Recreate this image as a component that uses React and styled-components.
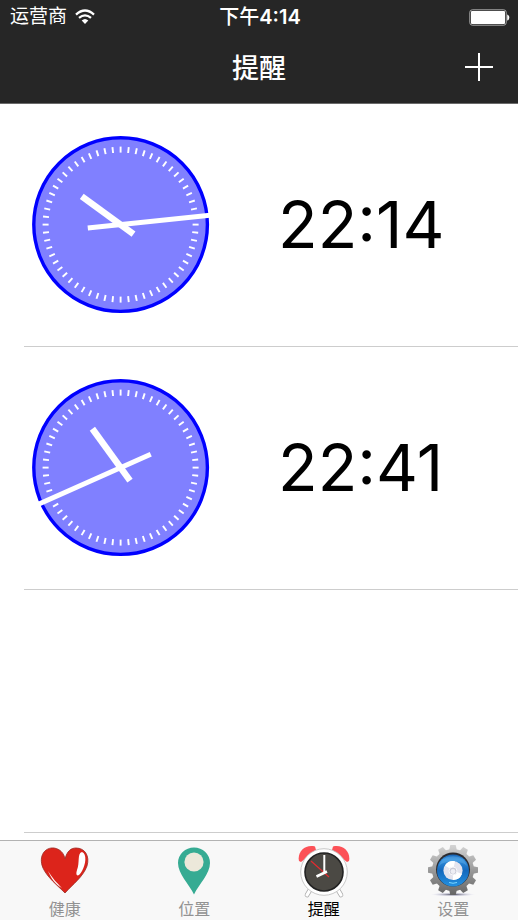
import React from 'react';
import styled, { createGlobalStyle } from 'styled-components';

const GlobalStyle = createGlobalStyle`
  * { box-sizing: border-box; }
  body {
    margin: 0;
    background: #fff;
    font-family: Inter, "Noto Sans CJK SC", sans-serif;
  }
  button { font: inherit; border: 0; padding: 0; background: none; cursor: pointer; }
`;

const Screen = styled.div`
  display: flex;
  flex-direction: column;
  height: 100vh;
`;

const Header = styled.header`
  flex: none;
  background: #262626;
  color: #fff;
  border-bottom: 1px solid #6a6a6a;
`;

const StatusBar = styled.div`
  display: grid;
  grid-template-columns: 1fr auto 1fr;
  align-items: center;
  height: 34px;
  padding: 0 8px 0 10px;
`;

const Carrier = styled.div`
  display: flex;
  align-items: center;
  gap: 8px;
  font-size: 19px;
  line-height: 32px;
  font-weight: 400;
`;

const StatusTime = styled.time`
  font-size: 20px;
  line-height: 32px;
  font-weight: 600;
  font-feature-settings: "case";
  span { font-weight: 500; }
`;

const BatteryIcon = styled.svg`
  justify-self: end;
`;

const NavBar = styled.div`
  display: grid;
  grid-template-columns: 1fr auto 1fr;
  align-items: center;
  height: 69px;
  padding: 0 24px;
`;

const Title = styled.h1`
  grid-column: 2;
  margin: 0;
  font-size: 27px;
  line-height: 40px;
  font-weight: 500;
`;

const AddButton = styled.button`
  justify-self: end;
  display: flex;
  padding-bottom: 4px;
  color: #fff;
`;

const Content = styled.main`
  flex: 1;
  min-height: 0;
  overflow: hidden;
`;

const List = styled.ul`
  margin: 0;
  padding: 0 0 0 24px;
  list-style: none;
`;

const Row = styled.li`
  display: flex;
  align-items: center;
  gap: 68px;
  height: 243px;
  padding-left: 8px;
  border-bottom: 1px solid #cdcdcd;
`;

const RowTime = styled.time`
  font-size: 65px;
  line-height: 80px;
  font-weight: 400;
  font-feature-settings: "case";
  color: #000;
`;

const TabBar = styled.nav`
  flex: none;
  display: grid;
  grid-template-columns: repeat(4, 1fr);
  height: 80px;
  background: #f8f8f8;
  border-top: 1px solid #b2b2b2;
`;

const Tab = styled.button`
  display: flex;
  flex-direction: column;
  align-items: center;
  padding-top: 4px;
  color: ${(p) => (p.$active ? '#000' : '#929292')};
`;

const TabLabel = styled.span`
  font-size: 16px;
  line-height: 20px;
`;

const range = (n) => Array.from({ length: n }, (_, i) => i);

function Clock({ hour, minute }) {
  const hourAngle = (hour % 12) * 30 + Math.floor(minute / 10) * 6;
  return (
    <svg width="178" height="178" viewBox="-88.6 -88.6 178 178" aria-hidden="true">
      <circle r="86.8" fill="#8080ff" stroke="#0000ff" strokeWidth="3.4" />
      <g stroke="#fff" strokeWidth="1.9">
        {range(60).map((i) => (
          <line key={i} y1="-78" y2="-72" transform={`rotate(${i * 6})`} />
        ))}
      </g>
      <line y1="16" y2="-48" stroke="#fff" strokeWidth="6.5" transform={`rotate(${hourAngle})`} />
      <line y1="33" y2="-90" stroke="#fff" strokeWidth="5" transform={`rotate(${minute * 6})`} />
    </svg>
  );
}

function Wifi() {
  return (
    <svg width="20" height="16" viewBox="0 0 20 16" fill="none" stroke="#fff" aria-hidden="true">
      <path d="M1 5.6 Q10 -2.6 19 5.6" strokeWidth="2.3" />
      <path d="M4 8.9 Q10 3.8 16 8.9" strokeWidth="2.3" />
      <path d="M6.7 11.6 Q10 8.6 13.3 11.6 L10 15Z" fill="#fff" stroke="none" />
    </svg>
  );
}

function Battery() {
  return (
    <BatteryIcon width="41" height="17" viewBox="0 0 41 17" aria-hidden="true">
      <rect x="0.8" y="0.8" width="36.4" height="15.4" rx="2.5" fill="none" stroke="#aaa" strokeWidth="1" />
      <rect x="2" y="2" width="34" height="13" rx="1" fill="#fff" />
      <path d="M38.2 5.4 C41 6 41 11 38.2 11.6Z" fill="#fff" />
    </BatteryIcon>
  );
}

function HeartIcon() {
  return (
    <svg width="56" height="54" viewBox="0 0 56 54" aria-hidden="true">
      <path d="M28 48 C20 40 10 32 6 23 C1 11 8 2 17 3 C23 4 27 8 28 14 C30 6 34 3 39 3 C48 3 53 11 50 21 C46 32 36 39 28 48Z" fill="#dc241b" stroke="#9b2923" strokeWidth="0.8" />
      <path d="M45 7 C50 9 49 19 45 26 C41 33 38 31 40 25 C43 18 40 8 45 7Z" fill="#fff" />
      <path d="M11 26 C16 34 20 38 25 43 C18 39 14 33 11 26Z" fill="#fff" />
    </svg>
  );
}

function PinIcon() {
  return (
    <svg width="56" height="54" viewBox="0 0 56 54" aria-hidden="true">
      <path d="M28 49.5 C23 39 12 29 12 18 A16 15.5 0 0 1 44 18 C44 29 33 39 28 49.5Z" fill="#36ab93" />
      <circle cx="28" cy="17" r="9.6" fill="#ece8da" />
    </svg>
  );
}

function AlarmIcon() {
  return (
    <svg width="56" height="54" viewBox="0 0 56 54" aria-hidden="true">
      <path d="M3 16 C1 7 9 -1 19 1.5 L20 5 L5 17Z" fill="#fc5157" />
      <path d="M53 16 C55 7 47 -1 37 1.5 L36 5 L51 17Z" fill="#fc5157" />
      <path d="M14 45 L11 50 M42 45 L45 50" stroke="#aaa" strokeWidth="4.6" strokeLinecap="round" />
      <path d="M14 45 L11 50 M42 45 L45 50" stroke="#fff" strokeWidth="3.2" strokeLinecap="round" />
      <circle cx="28" cy="27" r="23.3" fill="#fff" stroke="#bbb" strokeWidth="0.8" />
      <circle cx="28" cy="27" r="19" fill="#4b4944" stroke="#222" strokeWidth="1.6" />
      <path d="M15 16 L33 32" stroke="#e52a2f" strokeWidth="1.1" />
      <path d="M28.3 10 V28" stroke="#fff" strokeWidth="2" />
      <path d="M20.5 31.5 L31 26.5" stroke="#fff" strokeWidth="2.5" />
    </svg>
  );
}

function GearIcon() {
  return (
    <svg width="56" height="54" viewBox="0 0 56 54" aria-hidden="true">
      <defs>
        <linearGradient id="gear" x1="0" y1="0" x2="0" y2="1">
          <stop offset="0" stopColor="#d4d4d4" />
          <stop offset="0.5" stopColor="#969696" />
          <stop offset="1" stopColor="#5c5c5c" />
        </linearGradient>
        <linearGradient id="dial" x1="0" y1="0" x2="0" y2="1">
          <stop offset="0" stopColor="#1763b4" />
          <stop offset="0.15" stopColor="#338fdd" />
          <stop offset="0.5" stopColor="#1469bd" />
          <stop offset="1" stopColor="#2490e0" />
        </linearGradient>
        <radialGradient id="shade">
          <stop offset="0" stopColor="#4b4b5c" />
          <stop offset="1" stopColor="#c9c9ec" stopOpacity="0" />
        </radialGradient>
        <mask id="teeth" maskUnits="userSpaceOnUse" x="0" y="0" width="56" height="54">
          <circle cx="28" cy="25" r="21" fill="#fff" />
          {range(12).map((i) => (
            <path key={i} d="M24 6 L25.3 0 H30.7 L32 6Z" fill="#fff" transform={`rotate(${i * 30} 28 25)`} />
          ))}
        </mask>
      </defs>
      <ellipse cx="28" cy="49.5" rx="22" ry="2" fill="url(#shade)" />
      <rect width="56" height="54" fill="url(#gear)" mask="url(#teeth)" />
      <circle cx="28" cy="24.5" r="17" fill="#2b2b30" />
      <circle cx="28" cy="25.5" r="16" fill="url(#dial)" />
      <path d="M14 21 C17 8 39 8 42 21 C37 15 19 15 14 21Z" fill="#80c8f4" opacity="0.3" />
      <circle cx="28" cy="25.5" r="9.6" fill="#e4e4ee" />
      <path d="M28 25.5 L20 20.5 A9.4 9.4 0 0 1 30 16.3Z M28 25.5 L37 29 A9.4 9.4 0 0 1 28 34.9Z" fill="#fff" />
      <circle cx="28" cy="26" r="4" fill="#c9cad6" stroke="#f7f7fa" strokeWidth="1" />
      <circle cx="28" cy="26.5" r="2.4" fill="#eeeef4" />
      <path d="M24 37.5 Q28 39 32 37.5" stroke="#7ed9ff" strokeWidth="1" fill="none" />
    </svg>
  );
}

const alarms = [
  { hour: 22, minute: 14 },
  { hour: 22, minute: 41 },
];

const tabs = [
  { label: '健康', Icon: HeartIcon },
  { label: '位置', Icon: PinIcon },
  { label: '提醒', Icon: AlarmIcon, active: true },
  { label: '设置', Icon: GearIcon },
];

export default function App() {
  return (
    <Screen>
      <GlobalStyle />
      <Header>
        <StatusBar>
          <Carrier>运营商<Wifi /></Carrier>
          <StatusTime><span>下午</span>4:14</StatusTime>
          <Battery />
        </StatusBar>
        <NavBar>
          <Title>提醒</Title>
          <AddButton type="button" aria-label="添加">
            <svg width="30" height="30" viewBox="0 0 30 30" stroke="#fff" strokeWidth="2" aria-hidden="true">
              <path d="M1 15 H29 M15 1 V29" />
            </svg>
          </AddButton>
        </NavBar>
      </Header>
      <Content>
        <List>
          {alarms.map(({ hour, minute }) => (
            <Row key={`${hour}:${minute}`}>
              <Clock hour={hour} minute={minute} />
              <RowTime>{`${hour}:${minute}`}</RowTime>
            </Row>
          ))}
          <Row aria-hidden="true" />
        </List>
      </Content>
      <TabBar>
        {tabs.map(({ label, Icon, active }) => (
          <Tab key={label} type="button" $active={active} aria-current={active ? 'page' : undefined}>
            <Icon />
            <TabLabel>{label}</TabLabel>
          </Tab>
        ))}
      </TabBar>
    </Screen>
  );
}
